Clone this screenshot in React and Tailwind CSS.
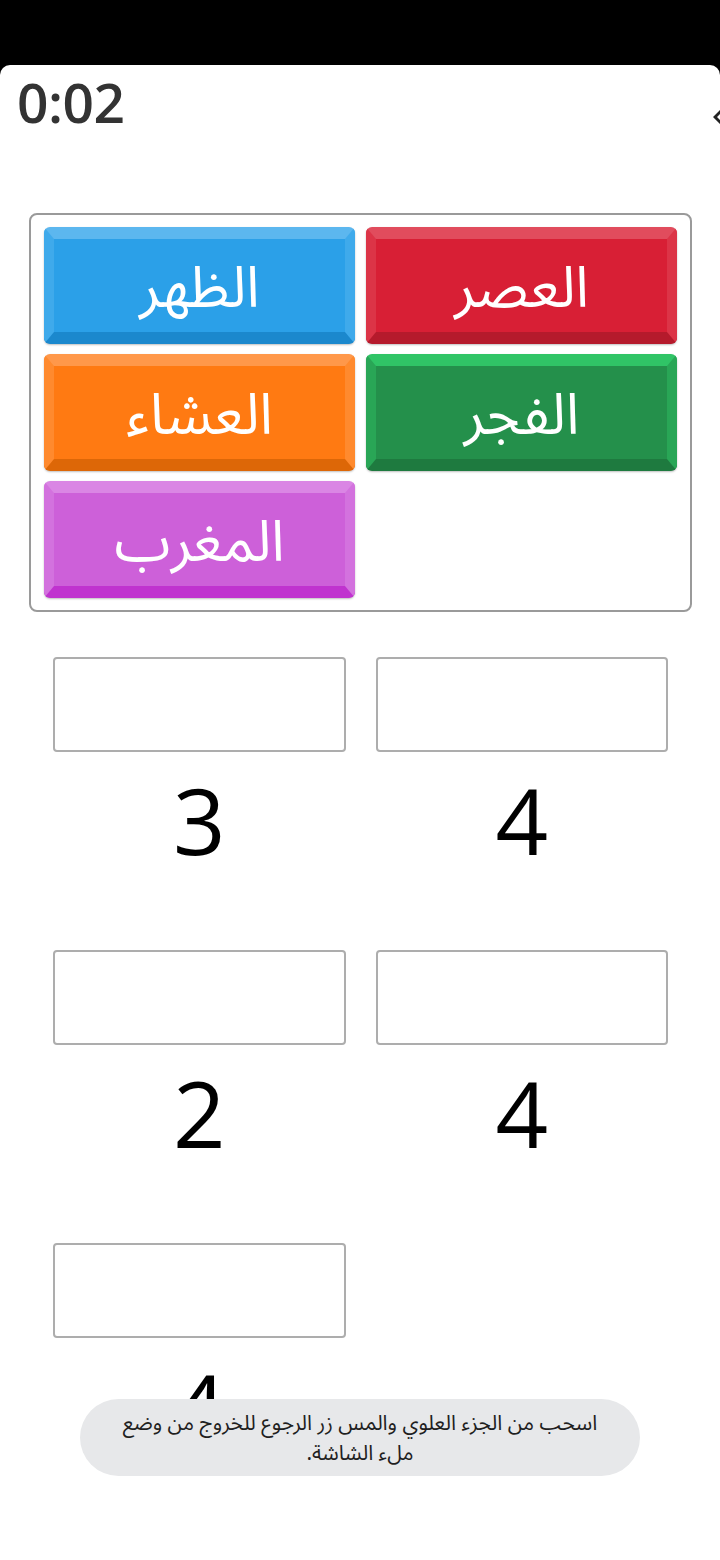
import React from 'react'

const PRAYERS = [
  { name: 'الظهر', face: 'bg-[#2ba0e8]', edge: 'border-t-[#5cb7ef] border-x-[#3faaeb] border-b-[#1b88cd]' },
  { name: 'العصر', face: 'bg-[#d81f35]', edge: 'border-t-[#e14c5d] border-x-[#dc3447] border-b-[#b51a2c]' },
  { name: 'العشاء', face: 'bg-[#ff7a12]', edge: 'border-t-[#ff984a] border-x-[#ff8a2e] border-b-[#dd6707]' },
  { name: 'الفجر', face: 'bg-[#24904b]', edge: 'border-t-[#30c466] border-x-[#29a656] border-b-[#1e7a3f]' },
  { name: 'المغرب', face: 'bg-[#cd60d9]', edge: 'border-t-[#da86e4] border-x-[#d372de] border-b-[#c033cf]' },
]

const SLOTS = ['3', '4', '2', '4', '4']

const arabic = { fontFamily: '"Noto Sans Arabic", "Noto Sans", "DejaVu Sans", sans-serif' }

function PrayerButton({ p }) {
  return (
    <div className={`h-[117px] rounded-[6px] border-t-[12px] border-x-[10px] border-b-[12px] ${p.edge} ${p.face} flex items-center justify-center shadow-[0_1px_2px_rgba(0,0,0,0.25)]`}>
      <span dir="rtl" className="text-white text-[57px] leading-none pt-[8px]" style={arabic}>{p.name}</span>
    </div>
  )
}

function Slot({ n }) {
  return (
    <div className="flex flex-col items-stretch">
      <div className="h-[95px] rounded-[4px] border-2 border-[#adadad] bg-white" />
      <div className="mt-[22px] text-center text-[92px] leading-none text-black font-['Open_Sans',sans-serif]">{n}</div>
    </div>
  )
}

export default function App() {
  return (
    <div className="min-h-[1560px] bg-black font-['Open_Sans',sans-serif]">
      <div className="h-[65px]" />
      <div className="relative bg-white rounded-t-[10px] min-h-[1495px] overflow-hidden">
        <div className="flex items-start justify-between pt-[9px] pl-[17px]">
          <div className="text-[55px] leading-none font-semibold text-[#333333] tracking-[-0.5px]">0:02</div>
        </div>
        {/* clipped icon on the right edge */}
        <svg className="absolute left-[711px] top-[40px]" width="24" height="24" viewBox="0 0 24 24">
          <path d="M2 12 L9 5 L11 7 L6 12 L11 17 L9 19 Z" fill="#222" />
        </svg>

        <div className="mt-[84px] mx-[29px] mr-[28px] border-2 border-[#9a9a9a] rounded-[8px] px-[13px] py-[12px]">
          <div className="grid grid-cols-2 gap-x-[11px] gap-y-[10px]">
            {PRAYERS.map(p => <PrayerButton key={p.name} p={p} />)}
          </div>
        </div>

        <div className="mt-[45px] pl-[53px] pr-[52px] grid grid-cols-2 gap-x-[30px] gap-y-[84px]">
          {SLOTS.map((n, i) => <Slot key={i} n={n} />)}
        </div>

        <div className="absolute left-[80px] top-[1334px] w-[560px] h-[77px] rounded-full bg-[#e7e8ea] flex items-center justify-center px-[35px]">
          <p dir="rtl" className="text-center text-[21px] leading-[30px] text-[#1f1f1f]" style={arabic}>
            اسحب من الجزء العلوي والمس زر الرجوع للخروج من وضع ملء الشاشة.
          </p>
        </div>
      </div>
    </div>
  )
}
